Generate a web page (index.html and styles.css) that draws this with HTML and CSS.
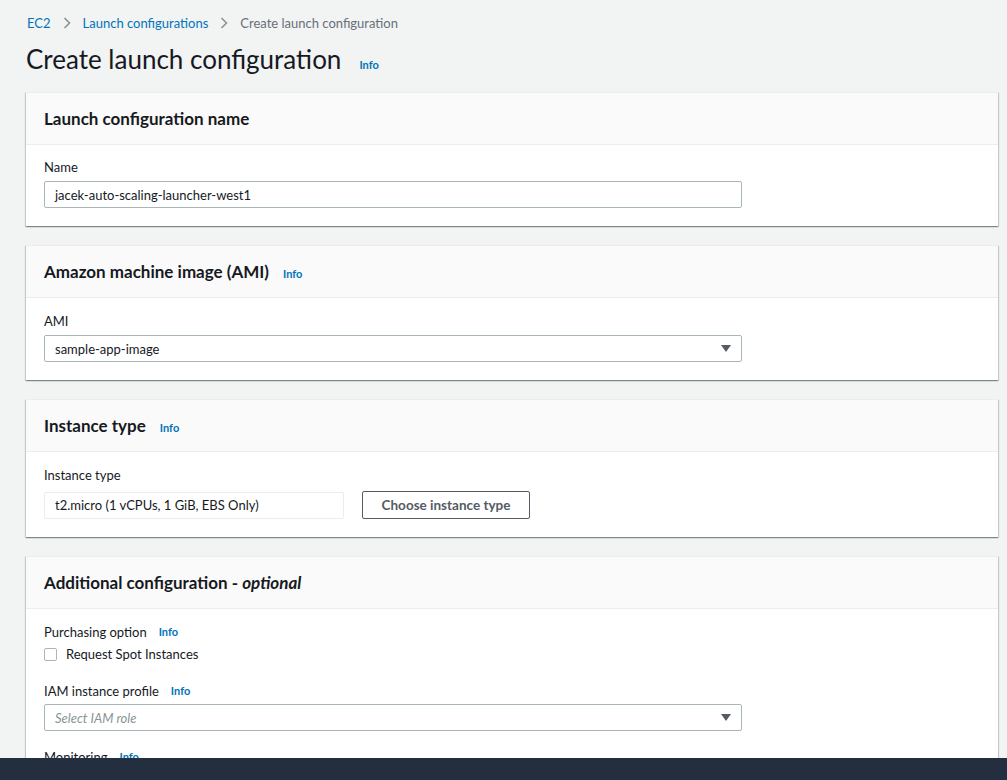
FILE: index.html
```html
<!DOCTYPE html>
<html lang="en">
<head>
<meta charset="utf-8">
<title>Create launch configuration</title>
<link rel="stylesheet" href="styles.css">
</head>
<body>
<div class="page">
  <nav class="breadcrumbs">
    <a class="crumb link" href="#">EC2</a>
    <svg class="chev" width="8" height="12" viewBox="0 0 8 12"><path d="M1.5 1 L6.5 6 L1.5 11" fill="none" stroke="#879596" stroke-width="1.6"/></svg>
    <a class="crumb link" href="#">Launch configurations</a>
    <svg class="chev" width="8" height="12" viewBox="0 0 8 12"><path d="M1.5 1 L6.5 6 L1.5 11" fill="none" stroke="#879596" stroke-width="1.6"/></svg>
    <span class="crumb current">Create launch configuration</span>
  </nav>

  <div class="page-title">
    <h1>Create launch configuration</h1>
    <a class="info" href="#">Info</a>
  </div>

  <section class="card">
    <header class="card-head"><h2>Launch configuration name</h2></header>
    <div class="card-body compact">
      <label class="field-label">Name</label>
      <div class="input wide">jacek-auto-scaling-launcher-west1</div>
    </div>
  </section>

  <section class="card">
    <header class="card-head"><h2>Amazon machine image (AMI)</h2><a class="info" href="#">Info</a></header>
    <div class="card-body">
      <label class="field-label">AMI</label>
      <div class="input wide select"><span>sample-app-image</span><span class="caret"></span></div>
    </div>
  </section>

  <section class="card">
    <header class="card-head"><h2>Instance type</h2><a class="info" href="#">Info</a></header>
    <div class="card-body">
      <label class="field-label">Instance type</label>
      <div class="row">
        <div class="input readonly">t2.micro (1 vCPUs, 1 GiB, EBS Only)</div>
        <button class="btn">Choose instance type</button>
      </div>
    </div>
  </section>

  <section class="card last">
    <header class="card-head"><h2>Additional configuration - <em>optional</em></h2></header>
    <div class="card-body compact">
      <div class="field-label tight">Purchasing option <a class="info" href="#">Info</a></div>
      <label class="check"><span class="box"></span>Request Spot Instances</label>
      <div class="field-label gap">IAM instance profile <a class="info" href="#">Info</a></div>
      <div class="input wide select"><span class="placeholder">Select IAM role</span><span class="caret"></span></div>
      <div class="field-label gap2">Monitoring <a class="info" href="#">Info</a></div>
    </div>
  </section>
</div>
<footer class="bottom-bar"></footer>
</body>
</html>
```
FILE: styles.css
```css
html, body {
  margin: 0;
  padding: 0;
  height: 100%;
  overflow: hidden;
}
body {
  background: #f2f3f3;
  font-family: "Lato", "Open Sans", sans-serif;
  color: #16191f;
  font-size: 14px;
}
.page {
  padding: 13px 9px 0 26px;
}
.breadcrumbs {
  display: flex;
  align-items: center;
  gap: 12px;
  height: 20px;
  font-size: 13px;
  padding-left: 1px;
}
.link { color: #0073bb; text-decoration: none; }
.current { color: #687078; }
.chev { display: block; }
.page-title {
  display: flex;
  align-items: baseline;
  gap: 18px;
  margin-top: 10px;
  height: 37px;
}
h1 {
  margin: 0;
  font-weight: 400;
  font-size: 26px;
  line-height: 32px;
  color: #16191f;
}
.info {
  color: #0073bb;
  font-size: 11px;
  font-weight: 700;
  text-decoration: none;
}
.card {
  background: #fff;
  border-top: 1px solid #eaeded;
  box-shadow: 0 1px 1px 0 rgba(0,28,36,.3), 1px 1px 1px 0 rgba(0,28,36,.15), -1px 1px 1px 0 rgba(0,28,36,.15);
  margin-top: 12px;
  margin-bottom: 19px;
}
.card + .card { margin-top: 0; }
.card-head {
  background: #fafafa;
  border-bottom: 1px solid #eaeded;
  height: 51px;
  display: flex;
  align-items: center;
  gap: 14px;
  padding: 0 18px;
}
.card-head .info { margin-top: 3px; }
h2 {
  margin: 0;
  font-size: 17px;
  font-weight: 700;
  color: #16191f;
}
h2 em { font-weight: 700; }
.card-body {
  padding: 12px 18px 18px;
}
.card-body.compact { padding-top: 11px; }
.field-label {
  display: flex;
  align-items: center;
  gap: 12px;
  line-height: 22px;
  font-size: 13px;
  color: #16191f;
  margin-bottom: 3px;
}
.field-label .info { margin-top: 1px; }
.field-label.tight { margin-bottom: 0; }
.field-label.gap { margin-top: 14px; margin-bottom: 2px; }
.field-label.gap2 { margin-top: 14px; }
.input {
  box-sizing: border-box;
  height: 27px;
  border: 1px solid #aab7b8;
  border-radius: 2px;
  padding: 0 10px;
  display: flex;
  align-items: center;
  font-size: 13px;
  color: #16191f;
}
.wide { width: 698px; }
.select { justify-content: space-between; }
.caret {
  width: 0; height: 0;
  border-left: 5px solid transparent;
  border-right: 5px solid transparent;
  border-top: 7px solid #545b64;
}
.placeholder { color: #879596; font-style: italic; }
.row {
  display: flex;
  align-items: center;
  gap: 18px;
  margin-top: 5px;
}
.readonly {
  width: 300px;
  border-color: #eaeded;
}
.btn {
  box-sizing: border-box;
  height: 28px;
  width: 168px;
  background: #fff;
  border: 1px solid #545b64;
  border-radius: 2px;
  font-family: inherit;
  font-size: 13.5px;
  font-weight: 700;
  color: #545b64;
  padding: 0;
}
.check {
  display: flex;
  align-items: center;
  gap: 9px;
  line-height: 22px;
  font-size: 13px;
}
.box {
  box-sizing: border-box;
  width: 13px; height: 13px;
  border: 1px solid #aab7b8;
  border-radius: 2px;
  background: #fff;
}
.bottom-bar {
  position: fixed;
  left: 0; right: 0; bottom: 0;
  height: 22px;
  background: #232f3e;
}
```
